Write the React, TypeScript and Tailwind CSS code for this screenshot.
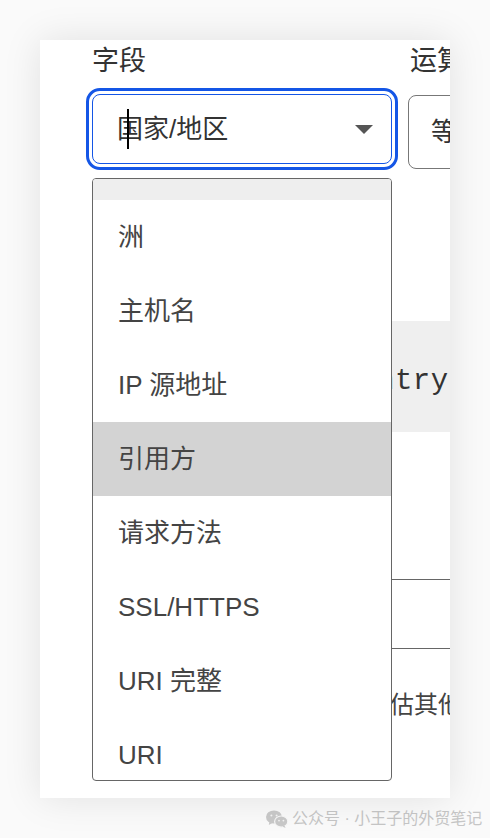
import React from 'react';

const fields = ['洲', '主机名', 'IP 源地址', '引用方', '请求方法', 'SSL/HTTPS', 'URI 完整', 'URI'];

const WeChatMark: React.FC = () => (
  <svg width="22" height="18" viewBox="0 0 22 18" fill="#c9c9c9">
    <ellipse cx="8" cy="7" rx="8" ry="6.6" />
    <path d="M3.5 11.5 L2.8 15 L6.6 12.8 Z" />
    <ellipse cx="15.2" cy="11.6" rx="6.6" ry="5.6" fill="#c9c9c9" stroke="#f7f7f7" strokeWidth="1.2" />
    <path d="M18.5 15.5 L19.6 18 L16.4 16.6 Z" />
    <circle cx="5.4" cy="5.6" r="1" fill="#f4f4f4" />
    <circle cx="10.6" cy="5.6" r="1" fill="#f4f4f4" />
    <circle cx="13" cy="10.6" r="0.9" fill="#f4f4f4" />
    <circle cx="17.4" cy="10.6" r="0.9" fill="#f4f4f4" />
  </svg>
);

export default function App() {
  const font = { fontFamily: '"Liberation Sans", "Noto Sans CJK SC", sans-serif' };

  return (
    <div className="min-h-[838px] w-[490px] overflow-hidden bg-[#fafafa]" style={font}>
      <div className="relative ml-[40px] mt-[40px] h-[758px] w-[410px] overflow-hidden bg-white pl-[52px] pt-[5px] shadow-[0_0_36px_rgba(0,0,0,0.10)]">
        {/* filter row */}
        <div className="flex gap-[16px]">
          <div className="flex w-[300px] shrink-0 flex-col">
            <div className="text-[27px] leading-[32px] text-[#333]">字段</div>
            <div className="relative mt-[17px] flex h-[70px] items-center justify-between rounded-[8px] border-[1.5px] border-[#1456e6] pl-[24px] pr-[18px] outline-[3px] outline-offset-[3px] outline-[#1456e6] outline-solid">
              <span className="relative text-[26px] leading-none text-[#333]">
                国家/地区
                <span className="absolute left-[10px] top-[-7px] h-[40px] w-[2px] bg-black" />
              </span>
              <svg width="18" height="9" viewBox="0 0 18 9">
                <path d="M0 0 H18 L9 9 Z" fill="#555" />
              </svg>
            </div>
          </div>
          <div className="flex w-[200px] shrink-0 flex-col">
            <div className="pl-[2px] text-[27px] leading-[32px] text-[#333]">运算符</div>
            <div className="mt-[18px] flex h-[74px] items-center rounded-[8px] border border-[#777] pl-[22px]">
              <span className="whitespace-nowrap text-[26px] leading-none text-[#333]">等于</span>
            </div>
          </div>
        </div>

        {/* content behind the open list */}
        <div className="mt-[152px] flex h-[111px] w-[500px] items-center bg-[#efefef] pl-[106px] pt-[10px]">
          <span className="whitespace-nowrap text-[29px] tracking-[0.5px] text-[#333]" style={{ fontFamily: '"Liberation Mono", monospace' }}>
            ip.src.country eq "CN"
          </span>
        </div>
        <div className="mt-[147px] h-[70px] w-[500px] border-y border-[#666]" />
        <p className="ml-[10px] mt-[40px] w-[600px] whitespace-nowrap text-[24px] leading-[32px] text-[#444]">
          在使用此规则时，系统会评估其他规则
        </p>

        {/* open field list */}
        <div className="absolute left-[52px] top-[138px] h-[603px] w-[300px] overflow-hidden rounded-[4px] border-[1.5px] border-[#666] bg-white">
          <div className="h-[21px] bg-[#eeeeee]" />
          {fields.map((f) => (
            <div
              key={f}
              className={`flex h-[74px] items-center pl-[25px] text-[26px] leading-none text-[#444] ${f === '引用方' ? 'bg-[#d3d3d3] text-[#333]' : ''}`}
            >
              {f}
            </div>
          ))}
        </div>
      </div>

      <div className="ml-[266px] mt-[9px] flex items-center gap-[4px]">
        <WeChatMark />
        <span className="whitespace-nowrap text-[16px] text-[#c6c6c6]">公众号 · 小王子的外贸笔记</span>
      </div>
    </div>
  );
}
